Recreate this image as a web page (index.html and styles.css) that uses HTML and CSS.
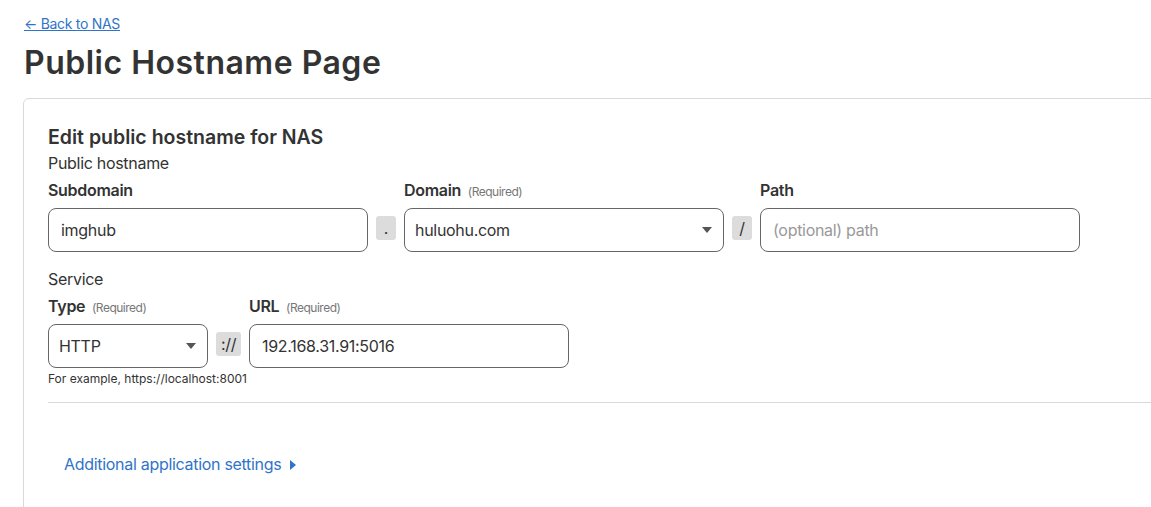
FILE: index.html
```html
<!DOCTYPE html>
<html lang="en">
<head>
    <meta charset="UTF-8">
    <meta name="viewport" content="width=device-width, initial-scale=1.0">
    <title>Public Hostname Page</title>
    <link rel="stylesheet" href="styles.css">
</head>
<body>

    <a class="back-link" href="#">← Back to NAS</a>
    <h1>Public Hostname Page</h1>

    <div class="card">
        <h2>Edit public hostname for NAS</h2>
        <p class="group-title">Public hostname</p>

        <div class="field-row">
            <div class="field">
                <label>Subdomain</label>
                <input type="text" class="input" value="imghub">
            </div>
            <span class="joiner">.</span>
            <div class="field">
                <label>Domain <small>(Required)</small></label>
                <div class="select">
                    <span>huluohu.com</span>
                    <span class="caret"></span>
                </div>
            </div>
            <span class="joiner">/</span>
            <div class="field">
                <label>Path</label>
                <input type="text" class="input" placeholder="(optional) path">
            </div>
        </div>

        <p class="group-title service-title">Service</p>

        <div class="field-row">
            <div class="field field-short">
                <label>Type <small>(Required)</small></label>
                <div class="select select-short">
                    <span>HTTP</span>
                    <span class="caret"></span>
                </div>
                <p class="hint">For example, https://localhost:8001</p>
            </div>
            <span class="joiner joiner-wide">://</span>
            <div class="field">
                <label>URL <small>(Required)</small></label>
                <input type="text" class="input" value="192.168.31.91:5016">
            </div>
        </div>

        <hr>

        <a class="more-link" href="#">Additional application settings <span class="more-caret"></span></a>
    </div>

</body>
</html>
```

FILE: styles.css
```css
/* General Styling */
html, body {
    overflow: hidden;
}

body {
    margin: 0;
    padding: 13px 24px 0;
    font-family: Inter, "Noto Sans", sans-serif;
    letter-spacing: -0.3px;
    color: #333;
    background: white;
}

.back-link {
    font-size: 14px;
    color: #2f74c8;
    text-decoration: underline;
}

h1 {
    font-size: 32px;
    font-weight: 600;
    margin: 10px 0 16px;
    letter-spacing: 0.5px;
}

.card {
    width: 1200px;
    margin-left: -1px;
    border: 1px solid #d9d9d9;
    border-radius: 6px;
    padding: 26px 24px 60px;
}

h2 {
    font-size: 19.5px;
    font-weight: 600;
    letter-spacing: 0;
    margin: 0 0 4px;
}

.group-title {
    font-size: 16px;
    line-height: 20px;
    margin: 0 0 7px;
}

.service-title {
    margin-top: 17px;
}

.field-row {
    display: flex;
    align-items: flex-start;
    gap: 8px;
}

.field-short {
    width: 160px;
}

.field label {
    display: block;
    height: 20px;
    font-size: 16px;
    line-height: 20px;
    font-weight: 600;
    margin-bottom: 8px;
}

.field label small {
    font-size: 12px;
    line-height: 1;
    font-weight: 400;
    letter-spacing: -0.5px;
    color: #777;
    margin-left: 3px;
}

.input,
.select {
    display: block;
    box-sizing: border-box;
    width: 320px;
    height: 44px;
    border: 1px solid #666;
    border-radius: 8px;
    padding: 0 12px;
    font-family: inherit;
    font-size: 16px;
    letter-spacing: inherit;
    color: #333;
}

.input::placeholder {
    color: #999;
}

.select {
    display: flex;
    align-items: center;
    justify-content: space-between;
    padding: 0 10px;
}

.select-short {
    width: 160px;
}

.caret {
    width: 0;
    height: 0;
    border-left: 5px solid transparent;
    border-right: 5px solid transparent;
    border-top: 6px solid #555;
    margin-right: 1px;
}

.joiner {
    margin-top: 36px;
    width: 20px;
    height: 24px;
    background: #dcdcdc;
    border-radius: 3px;
    text-align: center;
    line-height: 24px;
    font-size: 16px;
}

.joiner-wide {
    width: 25px;
}

.hint {
    font-size: 12px;
    letter-spacing: 0;
    white-space: nowrap;
    margin: 3px 0 0;
}

hr {
    border: none;
    border-top: 1px solid #d9d9d9;
    margin: 16px -24px 0 0;
}

.more-link {
    display: inline-block;
    margin: 51px 0 0 16px;
    font-size: 16px;
    color: #2f74c8;
    text-decoration: none;
}

.more-caret {
    display: inline-block;
    width: 0;
    height: 0;
    border-top: 5px solid transparent;
    border-bottom: 5px solid transparent;
    border-left: 6px solid #2f74c8;
    margin-left: 4px;
}
```
